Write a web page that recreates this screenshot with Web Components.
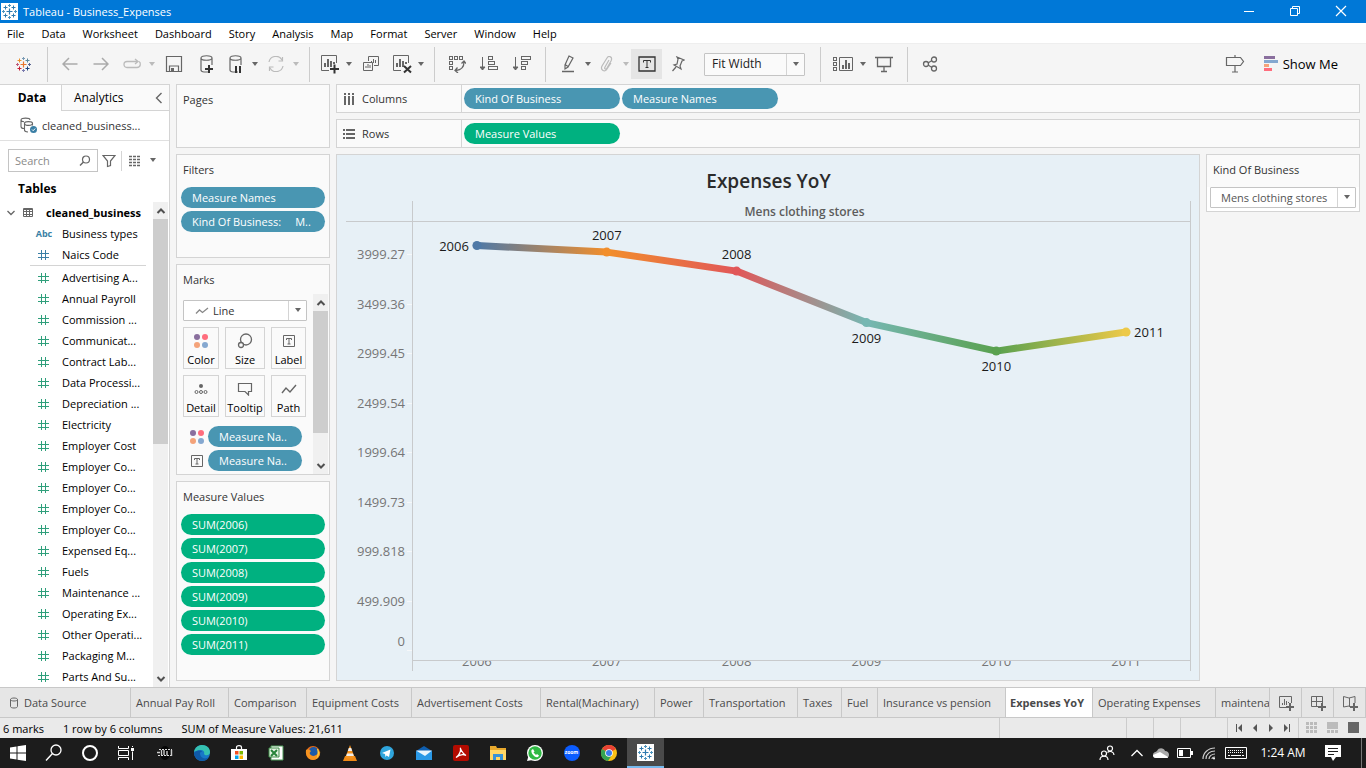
<!DOCTYPE html>
<html lang="en">
<head>
<meta charset="utf-8">
<title>Tableau - Business_Expenses</title>
<style>
  html, body { margin: 0; height: 100%; }
  body {
    font-family: "Open Sans", "Noto Sans", sans-serif;
    font-size: 11px; line-height: 16px; color: #000;
    --line: #d4d4d4; --card: #fafafa; --pane: #f5f5f5;
    --blue: #4996b2; --green: #00b180; --ink: #555;
  }
</style>
</head>
<body>
<tb-app></tb-app>
<script>
const RESET = `
  *, *::before, *::after { box-sizing: border-box; }
  button, input, select { font: inherit; color: inherit; margin: 0; padding: 0; border: 0; background: none; border-radius: 0; outline: 0; }
  button { display: inline-flex; align-items: center; justify-content: center; white-space: nowrap; }
`;
function component(name, css, html, setup) {
  const tpl = document.createElement('template');
  tpl.innerHTML = `<style>${RESET}${css}</style>${html}`;
  customElements.define(name, class extends HTMLElement {
    constructor() {
      super();
      this.attachShadow({ mode: 'open' }).append(tpl.content.cloneNode(true));
    }
    connectedCallback() { if (setup) setup(this, this.shadowRoot); }
  });
}

/* ---------- icons: [width, height, markup] ---------- */
const plus = (x, y, r, c, w = 1) => `<path d="M${x - r} ${y}h${2 * r}M${x} ${y - r}v${2 * r}" stroke="${c}" stroke-width="${w}"/>`;
const star = (mid, n, s, w, e, nw, ne, sw, se) =>
  plus(8.5, 8.5, 3, mid, 1.2) + plus(8.5, 2.5, 1.5, n) + plus(8.5, 14.5, 1.5, s) + plus(2.5, 8.5, 1.5, w) + plus(14.5, 8.5, 1.5, e) +
  plus(4.5, 4.5, 2, nw) + plus(12.5, 4.5, 2, ne) + plus(4.5, 12.5, 2, sw) + plus(12.5, 12.5, 2, se);
const G = '#666', L = '#bbb';
const cyl = `<path d="M11 18H6c-2 0-3-1-3-2V4M3 4c0-3 11-3 11 0s-11 3-11 0M14 4v7" fill="none" stroke="${G}" stroke-width="1.2"/>`;
const sheet = `<path d="M9 16.500H1.500V1.500h15V9" fill="none" stroke="${G}"/><path d="M5 13V9M8 13V5M11 13V7M14 10V8" stroke="${G}" stroke-width="2"/>`;
const hash = c => `<g fill="none" stroke="${c}"><path d="M3.500 1v10M7.500 1v10M0 4.500h11M0 8.500h11"/></g>`;
const dots = `<circle cx="3" cy="3" r="3" fill="#8a6f9e"/><circle cx="11" cy="3" r="3" fill="#ff6d7d"/><circle cx="3" cy="11" r="3" fill="#f4a37a"/><circle cx="11" cy="11" r="3" fill="#85a8d0"/>`;
const cell = (x, y, w = 3, h = 3) => `<rect x="${x}.5" y="${y}.5" width="${w}" height="${h}" fill="none" stroke="${G}"/>`;
const glyphT = (x, y, c) => `<path d="M${x - 4} ${y - 1.500}v-2.500h8v2.500M${x} ${y - 4}v8M${x - 2} ${y + 4}h4" fill="none" stroke="${c}" stroke-width="1.200"/>`;
const B = '#2e7bb0';
const ICONS = {
  logo: [17, 17, `<rect x="1" y="1" width="15" height="15" fill="#fff"/><rect width="17" height="17" fill="#fff"/>` + star(B, '#4c93bd', '#4c93bd', '#4c93bd', '#4c93bd', B, B, B, B)],
  mark: [17, 17, star('#e8762d', '#7a9bb5', '#7a7aae', '#c05a7a', '#5b6591', '#eb912c', '#59879b', '#c72035', '#1f447e')],
  min: [12, 12, `<path d="M1 6.500h10" stroke="#fff"/>`],
  restore: [12, 12, `<path d="M1.500 3.500h7v7h-7zM3.500 3V1.500h7v7H9" fill="none" stroke="#fff"/>`],
  close: [12, 12, `<path d="M1 1l10 10M11 1L1 11" stroke="#fff" stroke-width="1.200"/>`],
  back: [16, 14, `<path d="M15.500 7H1M7 1L1 7l6 6" fill="none" stroke="#aaa" stroke-width="1.500"/>`],
  fwd: [16, 14, `<path d="M.5 7H15M9 1l6 6-6 6" fill="none" stroke="#aaa" stroke-width="1.500"/>`],
  redo: [20, 12, `<path d="M8 9.500H5c-4 0-4-6 0-6h11M13 1l3 2.500L13 6M8 9.500h7c4 0 4-5 2-6" fill="none" stroke="${L}" stroke-width="1.300"/>`],
  save: [18, 18, `<path d="M1.500 1.500h15v15h-15zM4.500 16v-5h9v5" fill="none" stroke="${G}" stroke-width="1.200"/><path d="M6 13h3v4H6z" fill="${G}"/>`],
  addds: [18, 20, cyl + `<path d="M7 15h8M11 11v8" stroke="#333" stroke-width="2"/>`],
  pauseds: [18, 20, cyl + `<path d="M9 12v7M13 12v7" stroke="#333" stroke-width="2"/>`],
  refresh: [18, 16, `<path d="M2 6A7 7 0 0 1 15 4M16 10A7 7 0 0 1 3 12M15.500 1v4h-4M2.500 15v-4h4" fill="none" stroke="${L}" stroke-width="1.200"/>`],
  newsheet: [20, 20, sheet + `<path d="M10 15h9M14.500 10.500v9" stroke="#333" stroke-width="2"/>`],
  clearsheet: [20, 20, sheet + `<path d="M12 12l7 6.500M19 12l-7 6.500" stroke="#333" stroke-width="2"/>`],
  dupsheet: [18, 18, `<path d="M6.500 6V1.500h10v9H12M1.500 7.500h9v8h-9z" fill="none" stroke="${G}"/><path d="M9.500 8V6M11.500 8V4M13.500 8V5M4 13v-2M6 13V9M8 13v-3" stroke="${G}"/>`],
  swap: [18, 18, cell(1, 1) + cell(6, 1) + cell(11, 1) + cell(1, 6) + cell(1, 11) + `<path d="M16 7c0 5-3 8-8 8.500M13.500 8.500L16 6l2 2.500M9.500 12.500L7 15.500l3 2.500" fill="none" stroke="${G}" stroke-width="1.300"/>`],
  asc: [18, 18, `<path d="M2.500 2v13M0 12l2.500 3L5 12z" fill="${G}" stroke="${G}"/>` + cell(8, 1, 4, 3) + cell(8, 6, 6, 3) + cell(8, 11, 9, 3)],
  desc: [18, 18, `<path d="M2.500 2v13M0 12l2.500 3L5 12z" fill="${G}" stroke="${G}"/>` + cell(8, 1, 9, 3) + cell(8, 6, 6, 3) + cell(8, 11, 4, 3)],
  pen: [14, 18, `<path d="M8 1l4 2-5 9-3 2 0-4zM4 9.500l3 2" fill="none" stroke="${G}" stroke-width="1.200"/><path d="M1 16.500h12" stroke="${G}" stroke-width="1.500"/>`],
  clip: [14, 16, `<path d="M9 4L5 11c-1 2 1 3 2 1l4-7c2-4-2-6-4-3L2 10c-2 4 3 7 5 3l4-6" fill="none" stroke="${L}" stroke-width="1.200"/>`],
  label: [18, 16, `<path d="M1 1h16v14H1z" fill="none" stroke="#333" stroke-width="1.300"/><path d="M5.500 6.500V4.500h7v2M9 4.500v7M7.500 11.500h3" fill="none" stroke="#333"/>`],
  pin: [14, 16, `<path d="M6 1l7 3-2 1-2 5 1 3-7-4 3-1 1-5zM5 11l-3.500 4" fill="none" stroke="${G}" stroke-width="1.200"/>`],
  cards: [22, 16, cell(1, 1) + cell(1, 6) + cell(1, 11) + `<path d="M7.500 1.500h13v13h-13z" fill="none" stroke="${G}"/><path d="M11 13V9M14 13V4M17 13V7" stroke="${G}" stroke-width="2"/>`],
  present: [18, 18, `<path d="M0 2.500h18M2.500 3v8.500h13V3M9 11.500V17M6 16.500h6" fill="none" stroke="${G}" stroke-width="1.300"/>`],
  share: [16, 16, `<g fill="none" stroke="${G}" stroke-width="1.300"><circle cx="4" cy="8" r="2.500"/><circle cx="12" cy="3.500" r="2.500"/><circle cx="12" cy="12.500" r="2.500"/><path d="M6 7l4-2.500M6 9l4 2.500"/></g>`],
  guide: [20, 18, `<path d="M1.500 2.500h14l3 4-3 4h-14zM10 0v2.500M10 10.500V17M7 17h6" fill="none" stroke="${G}" stroke-width="1.200"/>`],
  showme: [16, 16, `<path d="M1 1.500h11" stroke="#8a6f9e" stroke-width="3"/><path d="M1 5.500h14" stroke="#85a8d0" stroke-width="3"/><path d="M1 9.500h5" stroke="#f4a37a" stroke-width="3"/><path d="M1 13.500h8" stroke="#ff6d7d" stroke-width="3"/>`],
  caret: [8, 5, `<path d="M1 0h6L4 4z" fill="#666"/>`],
  caretoff: [8, 5, `<path d="M1 0h6L4 4z" fill="#bbb"/>`],
  chevL: [8, 12, `<path d="M6.500 1L1.500 6l5 5" fill="none" stroke="${G}" stroke-width="1.400"/>`],
  chevD: [8, 6, `<path d="M.5 1L4 4.500 7.500 1" fill="none" stroke="${G}" stroke-width="1.300"/>`],
  up: [10, 8, `<path d="M1.500 6L5 2.500 8.500 6" fill="none" stroke="#505050" stroke-width="2"/>`],
  down: [10, 8, `<path d="M1.500 2L5 5.500 8.500 2" fill="none" stroke="#505050" stroke-width="2"/>`],
  source: [18, 17, `<path d="M4 11.500c-2 0-3-1-3-2V3M1 3c0-2.500 9-2.500 9 0M1 3c0 1 1.500 1.700 3 1.800M8 15c-3 0-3.500-1-3.500-2V6.500c0-2.500 8-2.500 8 0s-8 2.500-8 0M12.500 6.500v2" fill="none" stroke="${G}" stroke-width="1.100"/><circle cx="13.500" cy="12.500" r="3.500" fill="#3a7fa5"/><path d="M12 12.500l1.200 1.200 2-2.200" fill="none" stroke="#fff"/>`],
  search: [12, 12, `<circle cx="7" cy="4.500" r="3.500" fill="none" stroke="${G}" stroke-width="1.200"/><path d="M4.500 7L1 10.500" stroke="${G}" stroke-width="1.500"/>`],
  funnel: [14, 14, `<path d="M1 1.500h12L8.500 7v4.500l-3 1V7z" fill="none" stroke="${G}" stroke-width="1.200"/>`],
  list: [14, 12, `<path d="M1 1.500h12M1 4.500h12M1 7.500h12M1 10.500h12" stroke="${G}" stroke-width="1.400" stroke-dasharray="3 1"/>`],
  table: [12, 12, `<path d="M1.500 1.500h9v8h-9zM1.500 2.500h9M1 4.500h10M1 7.500h10M4.500 3v7M7.500 3v7" fill="none" stroke="${G}"/>`],
  hashBlue: [12, 12, hash('#3a7fa5')], hashGreen: [12, 12, hash('#2f9f7b')],
  columns: [12, 12, `<path d="M2 0v2M2 3v9M6 0v2M6 3v9M10 0v2M10 3v9" stroke="${G}" stroke-width="2"/>`],
  rows: [12, 12, `<path d="M0 2h2M3 2h9M0 6h2M3 6h9M0 10h2M3 10h9" stroke="${G}" stroke-width="2"/>`],
  line: [14, 8, `<path d="M1 6.500L4.500 3l3 2.500L13 1" fill="none" stroke="#888" stroke-width="1.300"/>`],
  color: [14, 14, dots],
  size: [16, 16, `<g fill="#fafafa" stroke="${G}" stroke-width="1.300"><circle cx="9" cy="6.500" r="5.500"/><circle cx="4" cy="12" r="2.500"/></g>`],
  text: [14, 14, `<path d="M1.500 1.500h11v11h-11z" fill="none" stroke="${G}"/><path d="M4.500 6V4.500h5V6M7 4.500v5.500M5.500 10h3" fill="none" stroke="${G}"/>`],
  detail: [14, 12, `<circle cx="7" cy="3" r="2" fill="${G}"/><g fill="none" stroke="${G}"><circle cx="2.500" cy="9" r="1.500"/><circle cx="7" cy="9" r="1.500"/><circle cx="11.500" cy="9" r="1.500"/></g>`],
  tooltip: [16, 14, `<path d="M1.500 1.500h13v8h-3V13L8 9.500H1.500z" fill="none" stroke="${G}" stroke-width="1.200"/>`],
  path: [16, 12, `<path d="M1 10l4-5 4 4 6-7" fill="none" stroke="${G}" stroke-width="1.400"/>`],
  dbtab: [10, 12, `<path d="M1.500 2.500v7c0 2 7 2 7 0v-7c0-2-7-2-7 0s7 2 7 0" fill="none" stroke="${G}"/>`],
  addsheet: [16, 16, `<path d="M9 12.500H1.500v-11h12V8" fill="none" stroke="${G}"/><path d="M4.500 10V8M6.500 10V4M8.500 10V6M10.500 8V7" stroke="${G}"/><path d="M8 12h8M12 8v8" stroke="${G}" stroke-width="2"/>`],
  adddash: [16, 16, `<path d="M8 11.500H1.500v-10h11V8M1.500 6.500h11M6.500 1.500v10" fill="none" stroke="${G}"/><path d="M8 12h8M12 8v8" stroke="${G}" stroke-width="2"/>`],
  addstory: [16, 16, `<path d="M8 12l-1-1-5.500 1V1.500L7 3l6-1.500V8M7.500 3v8" fill="none" stroke="${G}"/><path d="M8 12h8M12 8v8" stroke="${G}" stroke-width="2"/>`],
  first: [8, 8, `<path d="M1.500 0v8" stroke="#555"/><path d="M7 0v8L3 4z" fill="#555"/>`],
  prev: [8, 8, `<path d="M6 0v8L2 4z" fill="#555"/>`], next: [8, 8, `<path d="M2 0v8l4-4z" fill="#555"/>`],
  last: [8, 8, `<path d="M6.500 0v8" stroke="#555"/><path d="M1 0v8l4-4z" fill="#555"/>`],
  grid9: [12, 12, `<path d="M0 1.500h12M0 5.500h12M0 9.500h12" stroke="#bbb" stroke-width="3" stroke-dasharray="3 1"/>`],
  film: [12, 12, `<path d="M0 0h11v7H0zM0 8h3v3H0zM4 8h3v3H4zM8 8h3v3H8z" fill="#bbb"/>`],
  solid: [12, 12, `<rect width="11" height="11" fill="#666"/>`],
  win: [16, 16, `<path d="M0 2.500l6.500-1v6H0zM7.500 1.300L16 0v7.500H7.500zM0 8.500h6.500v6L0 13.500zM7.500 8.500H16V16l-8.500-1.200z" fill="#fff"/>`],
  find: [18, 18, `<circle cx="11" cy="6" r="5" fill="none" stroke="#fff" stroke-width="1.300"/><path d="M7.500 9.500L1 16.500" stroke="#fff" stroke-width="1.400"/>`],
  cortana: [18, 18, `<circle cx="9" cy="9" r="7" fill="none" stroke="#fff" stroke-width="2"/>`],
  tasks: [18, 16, `<path d="M1.500 1v2.500h10V1M1.500 5.500h10v5h-10zM1.500 15v-2.500h10V15M15.500 1v1M15.500 6.500V15" fill="none" stroke="#fff"/><rect x="14" y="3" width="3" height="3" fill="#fff"/>`],
  wheel: [18, 14, `<ellipse cx="9" cy="7" rx="5" ry="7" fill="#060606"/><path d="M3 3.500h13M2 9.500h14" stroke="#ddd" stroke-dasharray="2 1"/><path d="M1 6.500h3M5.500 4v5M8 4v5M11 5v4.500M15.500 4v6" stroke="#ccc" stroke-width="1.400"/>`],
  edge: [18, 18, `<circle cx="9" cy="9" r="8" fill="#1878c8"/><path d="M1 8C2 2 7 1 9 1c6 0 8 4 8 7 0 4-5 4-6 2 1-2-1-4-3-4-3 0-6 1-7 2z" fill="#35c1b1"/><path d="M7 9c0 5 5 7 9 4-3 6-13 5-15-3 0-3 7-5 8-2-1 0-2 0-2 1z" fill="#0f5aa8"/>`],
  store: [16, 16, `<path d="M0 4h16v11H0z" fill="#fff"/><path d="M5.500 4V2.500c0-2.500 5-2.500 5 0V4" fill="none" stroke="#fff" stroke-width="1.200"/><path d="M4 6h3.500v3.500H4z" fill="#f25022"/><path d="M8.500 6H12v3.500H8.500z" fill="#7fba00"/><path d="M4 10.500h3.500V14H4z" fill="#00a4ef"/><path d="M8.500 10.500H12V14H8.500z" fill="#ffb900"/>`],
  excel: [16, 16, `<path d="M3 1h12v14H3z" fill="#fff" stroke="#4d9a58"/><path d="M1 3h10v9H1z" fill="#e6f2e4" stroke="#3a8a44"/><path d="M3 5l6 6M9 5l-6 6" stroke="#27833a" stroke-width="2"/>`],
  firefox: [16, 16, `<circle cx="8" cy="8" r="7" fill="#e86a14"/><circle cx="8.500" cy="6.500" r="4.500" fill="#1d5aa8"/><path d="M1 5c2-1 4 0 5 1L4.500 8c1 4 6 4 9 0l1.500-2c1 5-3 9-7 9S0 11 1 5z" fill="#f79420"/><path d="M13 4c2 3 1 8-2 10 2-3 2-7 1-10z" fill="#ffd23e"/>`],
  vlc: [16, 16, `<path d="M3 11h10l2 5H1z" fill="#f08a16"/><path d="M8 0l4.500 12c-1 2-8 2-9 0z" fill="#f6931e"/><path d="M6.800 3h2.400l1 3H5.800zM5 8.500h6l.8 2.500H4.200z" fill="#eee"/>`],
  telegram: [16, 16, `<circle cx="8" cy="8" r="7" fill="#2fa5dc"/><path d="M3 8l8.500-3.500L10 12 7.500 10.500 6.500 12 6 9z" fill="#fff"/>`],
  mail: [18, 16, `<path d="M1 6l8-5 8 5v9H1z" fill="#0f5fb0"/><path d="M1 6h16v9H1z" fill="#2a98e6"/><path d="M1 5.500h16L10 11z" fill="#eaf5fd"/>`],
  pdf: [16, 16, `<rect width="16" height="16" rx="2" fill="#b30b00"/><path d="M3 12.500C6 11 8 6 7.500 3.500 7 2 8.500 8 13 10.500 10 9 6 10 3 12.500z" fill="none" stroke="#fff" stroke-width="1.300"/>`],
  folder: [18, 16, `<path d="M1 1h6l1 2h9v12H1z" fill="#e8a92d"/><path d="M1 5h16v10H1z" fill="#ffd766"/><path d="M4 15V9h10v6h-3v-3H7v3z" fill="#3692d8"/>`],
  whatsapp: [18, 18, `<circle cx="9" cy="9" r="8" fill="#fff"/><path d="M1 17l1.500-5 4 4z" fill="#fff"/><circle cx="9" cy="9" r="6.700" fill="#2fb944"/><path d="M5.500 6l1.500-1 1.500 2.500-1 1L10 11l1-1 2 1.500-1 1.500C8.500 14 4.500 9 5.500 6z" fill="#fff"/>`],
  zoom: [16, 16, `<circle cx="8" cy="8" r="8" fill="#0b5cff"/>`],
  chrome: [16, 16, `<circle cx="8" cy="8" r="8" fill="#fbc116"/><path d="M8 8L1 4a8 8 0 0 1 14 0z" fill="#ea4335"/><path d="M8 8L1 4a8 8 0 0 0 6 12l4-6z" fill="#34a353"/><circle cx="8" cy="8" r="3.800" fill="#fff"/><circle cx="8" cy="8" r="3" fill="#3b7ded"/>`],
  people: [16, 16, `<g fill="none" stroke="#fff" stroke-width="1.200"><circle cx="11" cy="3.500" r="2.500"/><circle cx="5" cy="8.500" r="2.500"/><path d="M1 15c0-5 8-5 8 0M8.500 7.500C11 5 15 7 15 10"/></g>`],
  chevUp: [14, 10, `<path d="M1.500 8L7 2.500 12.500 8" fill="none" stroke="#fff" stroke-width="1.300"/>`],
  cloud: [18, 12, `<path d="M1 8c0-3 3-3 4-4 2-4 7-3 8 0 5 0 5 6 2 7H4C2 11 1 10 1 8z" fill="#aaa"/><path d="M1 8l7-3 8 5c0 1-1 1-2 1H4C2 11 1 10 1 8z" fill="#fff"/>`],
  battery: [16, 12, `<path d="M.5 1.500h13v9H.5z" fill="none" stroke="#fff"/><path d="M2 3h4v6H2zM14 4h2v4h-2z" fill="#fff"/>`],
  wifi: [14, 14, `<g fill="none" stroke="#ccc" stroke-width="1.200"><path d="M1 13C1 7 6 2 13 2M4 13c0-5 4-8 9-8M7 13c0-3 3-5 6-5M10 13c0-1 1-2 3-2"/></g><circle cx="12" cy="12.500" r="1" fill="#fff"/>`],
  keyboard: [24, 14, `<path d="M1.500 1.500h21v11h-21z" fill="none" stroke="#fff"/><path d="M4 4.500h16M4 6.500h16" stroke="#fff" stroke-dasharray="1 1"/><path d="M4 9.500h2M7 9.500h10M18 9.500h2" stroke="#fff"/>`],
  note: [16, 16, `<path d="M0 0h16v12h-5l-3 4-2-4H0z" fill="#fff"/><path d="M3 3.500h10M3 6.500h10M3 9.500h6" stroke="#1e1e1e"/>`],
};
customElements.define('tb-icon', class extends HTMLElement {
  connectedCallback() {
    if (this.shadowRoot) return;
    const [w, h, body] = ICONS[this.getAttribute('name')];
    this.attachShadow({ mode: 'open' }).innerHTML =
      `<style>:host{display:inline-flex;flex:none}svg{display:block}</style><svg width="${w}" height="${h}" viewBox="0 0 ${w} ${h}" aria-hidden="true">${body}</svg>`;
  }
});
const icon = n => `<tb-icon name="${n}"></tb-icon>`;

/* ---------- shared pieces ---------- */
component('tb-pill', `
  :host { display: block; height: 21px; }
  button { width: 100%; height: 21px; border-radius: 11px; padding: 0 10px 0 11px; background: var(--pill, var(--blue)); color: #fff; justify-content: flex-start; }
`, `<button type="button"><slot></slot></button>`);

component('tb-card', `
  :host { display: flex; flex-direction: column; background: var(--card); border: 1px solid var(--line); color: #333; min-height: 0; }
  h2 { margin: 0; padding: 7px 6px 0; height: 32px; flex: none; font: inherit; }
  .body { flex: 1; min-height: 0; display: flex; flex-direction: column; gap: 3px; padding: 0 4px; }
`, `<h2></h2><div class="body" part="body"><slot></slot></div>`, (el, root) => {
  root.querySelector('h2').textContent = el.getAttribute('heading');
});

component('tb-select', `
  :host { display: flex; position: relative; background: #fff; border: 1px solid #c4c4c4; border-radius: 1px; }
  select { appearance: none; flex: 1; min-width: 0; padding-left: var(--inset, 7px); }
  .lead { position: absolute; left: 11px; top: 0; bottom: 0; display: flex; align-items: center; }
  .arrow { position: absolute; right: 0; top: 0; bottom: 0; width: 18px; border-left: 1px solid var(--line); display: flex; align-items: center; justify-content: center; pointer-events: none; }
`, `<span class="lead"></span><select></select><span class="arrow">${icon('caret')}</span>`, (el, root) => {
  const s = root.querySelector('select');
  s.setAttribute('aria-label', el.getAttribute('label'));
  s.innerHTML = `<option>${el.getAttribute('value')}</option>`;
  if (el.hasAttribute('icon')) root.querySelector('.lead').innerHTML = icon(el.getAttribute('icon'));
});

component('tb-scrollbar', `
  :host { display: flex; flex-direction: column; width: 15px; flex: none; background: #f0f0f0; }
  button { height: 17px; flex: none; }
  .thumb { background: #cdcdcd; flex: var(--thumb, 1) 0 0; }
  .rest { flex: var(--rest, 1) 0 0; }
`, `<button type="button" aria-label="Scroll up">${icon('up')}</button><div class="thumb"></div><div class="rest"></div><button type="button" aria-label="Scroll down">${icon('down')}</button>`);

/* ---------- window chrome ---------- */
component('tb-titlebar', `
  :host { display: flex; align-items: center; height: 23px; background: #0078d7; color: #fff; padding: 0 2px 0 1px; gap: 5px; }
  h1 { margin: 0; flex: 1; font: inherit; }
  .win { display: flex; align-self: flex-start; }
  button { width: 46px; height: 21px; }
`, `${icon('logo')}<h1>Tableau - Business_Expenses</h1>
<div class="win"><button type="button" aria-label="Minimize">${icon('min')}</button><button type="button" aria-label="Restore">${icon('restore')}</button><button type="button" aria-label="Close">${icon('close')}</button></div>`);

const MENUS = ['File', 'Data', 'Worksheet', 'Dashboard', 'Story', 'Analysis', 'Map', 'Format', 'Server', 'Window', 'Help'];
component('tb-menubar', `
  :host { display: block; background: #fff; }
  nav { display: flex; gap: 17px; height: 20px; padding: 2px 7px 0; }
`, `<nav>${MENUS.map(m => `<button type="button">${m}</button>`).join('')}</nav>`);

const tool = (n, label, size = 'm') => `<button type="button" class="${size}" aria-label="${label}">${icon(n)}</button>`;
const drop = (off) => `<button type="button" class="drop" aria-label="More">${icon(off ? 'caretoff' : 'caret')}</button>`;
const sep = '<i></i>';
component('tb-toolbar', `
  :host { display: flex; align-items: center; height: 41px; background: var(--pane); border-top: 1px solid #eee; padding-right: 24px; font-size: 12px; }
  .m { width: 31px; height: 30px; } .s { width: 28px; height: 30px; } .l { width: 34px; height: 30px; }
  .logo { width: 47px; } .drop { width: 10px; height: 30px; }
  .on { background: #e5e5e5; }
  i { width: 1px; height: 35px; background: #ccc; margin: 0 6px 0 8px; flex: none; }
  .logo + i { margin-left: 0; }
  tb-select { width: 101px; height: 23px; margin: 0 7px 0 11px; background: var(--card); color: #222; }
  .space { flex: 1; }
  .showme { gap: 4px; padding: 0 4px; margin-left: 8px; font-size: 13px; }
`, `${tool('mark', 'Start page', 'logo')}${sep}${tool('back', 'Undo')}${tool('fwd', 'Redo')}${tool('redo', 'Replay')}${drop(1)}${tool('save', 'Save', 'l')}${tool('addds', 'New data source')}${tool('pauseds', 'Pause updates', 's')}${drop()}${tool('refresh', 'Refresh')}${drop(1)}${sep}
${tool('newsheet', 'New worksheet', 's')}${drop()}${tool('dupsheet', 'Duplicate', 'l')}${tool('clearsheet', 'Clear sheet', 's')}${drop()}${sep}
${tool('swap', 'Swap rows and columns')}${tool('asc', 'Sort ascending', 'l')}${tool('desc', 'Sort descending')}${sep}
${tool('pen', 'Highlight')}${drop()}${tool('clip', 'Group', 's')}${drop(1)}${tool('label', 'Show mark labels', 'm on')}${tool('pin', 'Fix axes')}
<tb-select label="Fit" value="Fit Width"></tb-select>${sep}${tool('cards', 'Show cards')}${drop()}${tool('present', 'Presentation mode')}${sep}${tool('share', 'Share')}
<span class="space"></span>${tool('guide', 'Guide')}<button type="button" class="showme">${icon('showme')}Show Me</button>`);

/* ---------- data pane ---------- */
const MEASURES = ['Advertising A...', 'Annual Payroll', 'Commission ...', 'Communicat...', 'Contract Lab...', 'Data Processi...', 'Depreciation ...', 'Electricity', 'Employer Cost', 'Employer Co...', 'Employer Co...', 'Employer Co...', 'Employer Co...', 'Expensed Eq...', 'Fuels', 'Maintenance ...', 'Operating Ex...', 'Other Operati...', 'Packaging M...', 'Parts And Su...'];
const field = (ic, t) => `<li><span class="ic">${ic}</span>${t}</li>`;
component('tb-datapane', `
  :host { display: flex; flex-direction: column; background: #fff; border: solid var(--line); border-width: 1px 1px 0 0; min-height: 0; }
  .tabs { display: flex; height: 26px; font-size: 12px; flex: none; }
  .tabs .data { width: 61px; font-weight: 700; padding-left: 3px; }
  .tabs .ana { flex: 1; justify-content: space-between; padding: 0 6px 0 12px; background: var(--card); border: solid var(--line); border-width: 0 0 1px 1px; }
  .src { display: flex; align-items: center; gap: 4px; height: 30px; padding-left: 20px; border-bottom: 1px solid #e0e0e0; color: #333; flex: none; }
  .find { display: flex; align-items: center; height: 39px; padding: 0 10px 0 8px; flex: none; }
  .box { display: flex; align-items: center; width: 90px; height: 23px; border: 1px solid #c4c4c4; padding: 0 6px; }
  input { flex: 1; min-width: 0; } input::placeholder { color: #8a8a8a; opacity: 1; }
  .find > button { height: 20px; } .f { width: 21px; } .v { width: 26px; border-left: 1px solid var(--line); margin-left: 2px; }
  .d { width: 12px; }
  h3 { margin: 0; padding: 1px 18px 0; height: 22px; font-size: 12px; font-weight: 700; flex: none; }
  .tree { display: flex; flex: 1; min-height: 0; }
  ul { list-style: none; margin: 0; padding: 0; flex: 1; overflow: hidden; }
  li { display: flex; align-items: center; height: 21px; padding-left: 35px; white-space: nowrap; }
  li .ic { width: 18px; margin-right: 9px; display: flex; justify-content: center; }
  li.root { padding-left: 7px; font-weight: 700; } .root tb-icon + tb-icon { margin: 0 12px 0 7px; }
  .abc { font-size: 9px; font-weight: 700; color: #3a7fa5; }
  li.rule { height: 1px; margin: 0 7px 1px 30px; background: var(--line); padding: 0; }
  tb-scrollbar { --thumb: 225; --rest: 226; margin-right: 1px; }
`, `<div class="tabs"><button type="button" class="data">Data</button><button type="button" class="ana">Analytics${icon('chevL')}</button></div>
<div class="src">${icon('source')}cleaned_business...</div>
<div class="find"><label class="box"><input type="text" placeholder="Search" aria-label="Search fields">${icon('search')}</label>
<button type="button" class="f" aria-label="Filter">${icon('funnel')}</button><button type="button" class="v" aria-label="View">${icon('list')}</button><button type="button" class="d" aria-label="View options">${icon('caret')}</button></div>
<h3>Tables</h3>
<div class="tree"><ul><li class="root">${icon('chevD')}${icon('table')}cleaned_business</li>
${field('<span class="abc">Abc</span>', 'Business types')}${field(icon('hashBlue'), 'Naics Code')}<li class="rule"></li>
${MEASURES.map(m => field(icon('hashGreen'), m)).join('')}</ul><tb-scrollbar></tb-scrollbar></div>`);

/* ---------- cards column ---------- */
const markBtn = (n, t) => `<button type="button">${icon(n)}<span>${t}</span></button>`;
component('tb-marks', `
  :host { display: flex; flex: 1; min-height: 0; margin: -3px -4px 0 -4px; }
  .main { flex: 1; padding: 6px 6px 0; overflow: hidden; color: #000; }
  tb-select { height: 21px; --inset: 29px; margin-bottom: 6px; color: #333; }
  .grid { display: grid; grid-template-columns: 36px 40px 35px; grid-auto-rows: 42px; gap: 6px; margin-bottom: 9px; }
  .grid button { flex-direction: column; border: 1px solid var(--line); justify-content: space-between; padding-top: 5px; }
  .grid tb-icon { height: 16px; align-items: center; }
  .row { display: flex; align-items: center; gap: 4px; padding: 0 5px 3px 7px; }
  .row tb-pill { flex: 1; }
  tb-scrollbar { --thumb: 122; --rest: 24; margin-right: 1px; }
`, `<div class="main"><tb-select label="Mark type" icon="line" value="Line"></tb-select>
<div class="grid">${markBtn('color', 'Color')}${markBtn('size', 'Size')}${markBtn('text', 'Label')}${markBtn('detail', 'Detail')}${markBtn('tooltip', 'Tooltip')}${markBtn('path', 'Path')}</div>
<div class="row">${icon('color')}<tb-pill>Measure Na..</tb-pill></div><div class="row">${icon('text')}<tb-pill>Measure Na..</tb-pill></div></div>
<tb-scrollbar></tb-scrollbar>`);

component('tb-cards', `
  :host { display: grid; grid-template-rows: 64px 104px 211px 1fr; gap: 6px; min-height: 0; }
  .vals { --pill: var(--green); } .more { margin-left: 14px; }
`, `<tb-card heading="Pages"></tb-card>
<tb-card heading="Filters"><tb-pill>Measure Names</tb-pill><tb-pill>Kind Of Business:<span class="more">M..</span></tb-pill></tb-card>
<tb-card heading="Marks"><tb-marks></tb-marks></tb-card>
<tb-card heading="Measure Values" class="vals">${[2006, 2007, 2008, 2009, 2010, 2011].map(y => `<tb-pill>SUM(${y})</tb-pill>`).join('')}</tb-card>`);

/* ---------- worksheet ---------- */
component('tb-shelf', `
  :host { display: flex; height: 29px; border: 1px solid var(--line); background: var(--card); color: #333; }
  .name { display: flex; align-items: center; gap: 7px; width: 125px; padding-left: 6px; border-right: 1px solid var(--line); }
  .pills { display: flex; align-items: center; gap: 2px; padding-left: 2px; }
  ::slotted(tb-pill) { width: 156px; }
`, `<div class="name"></div><div class="pills"><slot></slot></div>`, (el, root) => {
  root.querySelector('.name').innerHTML = icon(el.getAttribute('icon')) + el.getAttribute('heading');
});

const POINTS = [
  { year: 2006, value: 4088, color: '#4e79a7', side: 'left' },
  { year: 2007, value: 4022, color: '#f28e2b', side: 'top' },
  { year: 2008, value: 3830, color: '#e15759', side: 'top' },
  { year: 2009, value: 3310, color: '#76b7b2', side: 'bottom' },
  { year: 2010, value: 3022, color: '#59a14f', side: 'bottom' },
  { year: 2011, value: 3214, color: '#edc948', side: 'right' },
];
const TICKS = ['3999.27', '3499.36', '2999.45', '2499.54', '1999.64', '1499.73', '999.818', '499.909', '0'];
component('tb-chart', `
  :host { display: block; overflow: hidden; min-height: 0; min-width: 0; font-size: 13px; }
  svg { display: block; }
  .tick { fill: #767676; } .pt { fill: #1b1b1b; }
`, `<svg role="img" aria-label="Expenses year over year"></svg>`, (el, root) => {
  const svg = root.querySelector('svg');
  const draw = () => {
    const W = el.clientWidth, H = el.clientHeight;
    if (!W || !H) return;
    const left = 66, head = 20, foot = 11, right = W, base = H - foot;
    const top = 4336, low = -98;
    const y = v => head + (top - v) / (top - low) * (base - head);
    const step = (right - left) / POINTS.length;
    const x = i => left + step * (i + .5);
    let s = '<defs>';
    POINTS.slice(1).forEach((p, i) => {
      const a = POINTS[i];
      s += `<linearGradient id="g${i}" gradientUnits="userSpaceOnUse" x1="${x(i)}" y1="0" x2="${x(i + 1)}" y2="0"><stop offset="0" stop-color="${a.color}"/><stop offset="1" stop-color="${p.color}"/></linearGradient>`;
    });
    s += '</defs>';
    s += `<path d="M0 ${head + .5}H${W}M${left + .5} 0V${H}M${right - .5} 0V${H}M${left} ${base + .5}H${right}" stroke="#c8cacc" fill="none"/>`;
    TICKS.forEach(t => {
      const ty = Math.round(y(+t));
      s += `<path d="M${left - 5} ${ty + .5}h5" stroke="#f6f8fa"/><text class="tick" text-anchor="end" x="${left - 7}" y="${t === '0' ? ty - 4 : ty + 5}">${t}</text>`;
    });
    POINTS.slice(1).forEach((p, i) => {
      s += `<path d="M${x(i)} ${y(POINTS[i].value)}L${x(i + 1)} ${y(p.value)}" stroke="url(#g${i})" stroke-width="7" stroke-linecap="round"/>`;
    });
    const at = { left: [-8, 5, 'end'], right: [8, 5, 'start'], top: [0, -12, 'middle'], bottom: [0, 20, 'middle'] };
    s += `<svg y="${base + 1}" height="${foot}" width="${W}">`;
    POINTS.forEach((p, i) => { s += `<text class="tick" text-anchor="middle" x="${x(i)}" y="5">${p.year}</text>`; });
    s += '</svg>';
    POINTS.forEach((p, i) => {
      const [dx, dy, anchor] = at[p.side];
      s += `<circle cx="${x(i)}" cy="${y(p.value)}" r="4.500" fill="${p.color}"/><text class="pt" text-anchor="${anchor}" x="${x(i) + dx}" y="${Math.round(y(p.value)) + dy}">${p.year}</text>`;
    });
    s += `<text text-anchor="middle" x="${(left + W) / 2 + 3}" y="15" font-size="12" font-weight="600" fill="#5c5c5c">Mens clothing stores</text>`;
    svg.setAttribute('width', W); svg.setAttribute('height', H);
    svg.innerHTML = s;
  };
  draw();
  new ResizeObserver(draw).observe(el);
});

component('tb-sheet', `
  :host { display: grid; grid-template: 29px 29px 1fr / 1fr 154px; gap: 6px; min-height: 0; }
  tb-shelf { grid-column: 1 / -1; }
  .viz { display: flex; flex-direction: column; background: #e7f0f6; border: 1px solid var(--line); min-width: 0; min-height: 0; padding: 10px 8px 9px 9px; }
  .viz h2 { margin: 0; height: 36px; font-size: 19px; line-height: 32px; font-weight: 600; text-align: center; color: #2b2b2b; }
  tb-chart { flex: 1; }
  .rows { --pill: var(--green); }
  .filter { align-self: start; height: 58px; }
  .filter::part(body) { background: #fff; padding-top: 0; }
  tb-select { height: 21px; --inset: 10px; color: #555; margin: 0 -1px; }
`, `<tb-shelf heading="Columns" icon="columns"><tb-pill>Kind Of Business</tb-pill><tb-pill>Measure Names</tb-pill></tb-shelf>
<tb-shelf heading="Rows" icon="rows" class="rows"><tb-pill>Measure Values</tb-pill></tb-shelf>
<section class="viz"><h2>Expenses YoY</h2><tb-chart></tb-chart></section>
<tb-card heading="Kind Of Business" class="filter"><tb-select label="Kind Of Business" value="Mens clothing stores"></tb-select></tb-card>`);

/* ---------- bottom bars ---------- */
const SHEETS = [['Annual Pay Roll', 98], ['Comparison', 78], ['Equipment Costs', 105], ['Advertisement Costs', 129], ['Rental(Machinary)', 114], ['Power', 49], ['Transportation', 94], ['Taxes', 44], ['Fuel', 36], ['Insurance vs pension', 128], ['Expenses YoY', 87], ['Operating Expenses', 123]];
component('tb-sheettabs', `
  :host { display: flex; height: 31px; background: #e6e6e6; border: solid #c8c8c8; border-width: 1px 0; color: #4a4a4a; }
  button { border-left: 1px solid #c8c8c8; padding-left: 5px; justify-content: flex-start; flex: none; }
  .ds { width: 130px; border: 0; padding-left: 9px; gap: 5px; }
  .on { background: #fff; font-weight: 700; padding-left: 4px; }
  .last { flex: 1 1 0; min-width: 0; }
  .add { width: 32px; justify-content: center; padding: 0; }
  .add:last-child { border-right: 1px solid #c8c8c8; width: 33px; }
`, `<button type="button" class="ds">${icon('dbtab')}Data Source</button>${SHEETS.map(([t, w]) => `<button type="button" style="width:${w}px"${t === 'Expenses YoY' ? ' class="on"' : ''}>${t}</button>`).join('')}<button type="button" class="last">maintena</button>
<button type="button" class="add" aria-label="New worksheet">${icon('addsheet')}</button><button type="button" class="add" aria-label="New dashboard">${icon('adddash')}</button><button type="button" class="add" aria-label="New story">${icon('addstory')}</button>`);

component('tb-status', `
  :host { display: flex; align-items: center; height: 20px; background: #eaeaea; padding-left: 3px; }
  .t { margin-right: 19px; padding-top: 2px; }
  .space { flex: 1; }
  .c { height: 20px; border-left: 1px solid #ccc; display: flex; align-items: center; justify-content: center; padding-bottom: 1px; }
  .c button { width: 16px; height: 18px; } .v button { width: 21px; }
`, `<span class="t">6 marks</span><span class="t">1 row by 6 columns</span><span class="t">SUM of Measure Values: 21,611</span><span class="space"></span>
<div class="c" style="width:127px"></div><div class="c" style="width:27px"></div><div class="c" style="width:27px"></div><div class="c" style="width:47px"></div>
<div class="c" style="width:71px"><button type="button" aria-label="First">${icon('first')}</button><button type="button" aria-label="Previous">${icon('prev')}</button><button type="button" aria-label="Next">${icon('next')}</button><button type="button" aria-label="Last">${icon('last')}</button></div>
<div class="c v" style="width:68px"><button type="button" aria-label="Sheet sorter">${icon('grid9')}</button><button type="button" aria-label="Filmstrip">${icon('film')}</button><button type="button" aria-label="Tabs">${icon('solid')}</button></div>`);

const task = (n, cls = '') => `<button type="button" class="${cls}" aria-label="${n}">${icon(n)}</button>`;
component('tb-taskbar', `
  :host { display: flex; height: 30px; background: #1c1c1c; color: #fff; }
  button { width: 37px; height: 30px; }
  .sys { width: 36px; } .tray { width: 24px; } .kb { width: 30px; } .gap { width: 2px; }
  .on { background: #4a4a4a; border-bottom: 2px solid #76b9ed; }
  .z { position: relative; } .z span { position: absolute; left: 0; right: 0; top: 7px; font-size: 5px; line-height: 14px; font-weight: 700; }
  .space { flex: 1; } .clock { width: 64px; font-size: 12px; }
  .peek { width: 5px; margin-left: 10px; border-left: 1px solid #777; }
`, `${task('win', 'sys')}${task('find', 'sys')}${task('cortana', 'sys')}${task('tasks', 'sys')}<span class="gap"></span>
${['wheel', 'edge', 'store', 'excel', 'firefox', 'vlc', 'telegram', 'mail', 'pdf', 'folder', 'whatsapp'].map(n => task(n)).join('')}<button type="button" class="z">${icon('zoom')}<span>zoom</span></button>${task('chrome')}${task('logo', 'on')}
<span class="space"></span>${task('people', 'sys')}${task('chevUp', 'tray')}${task('cloud', 'tray')}${task('battery', 'tray')}${task('wifi', 'tray')}${task('keyboard', 'kb')}<button type="button" class="clock">1:24 AM</button>${task('note', 'sys')}<button type="button" class="peek" aria-label="Show desktop"></button>`);

component('tb-app', `
  :host { display: flex; flex-direction: column; height: 100vh; min-height: 600px; background: var(--pane); overflow: hidden; }
  main { flex: 1; min-height: 0; display: grid; grid-template: minmax(0, 1fr) / 170px 154px minmax(0, 1fr); gap: 6px; padding-right: 6px; }
  tb-cards, tb-sheet { padding-bottom: 6px; }
`, `<tb-titlebar></tb-titlebar><tb-menubar></tb-menubar><tb-toolbar></tb-toolbar>
<main><tb-datapane></tb-datapane><tb-cards></tb-cards><tb-sheet></tb-sheet></main>
<tb-sheettabs></tb-sheettabs><tb-status></tb-status><tb-taskbar></tb-taskbar>`);
</script>
</body>
</html>
